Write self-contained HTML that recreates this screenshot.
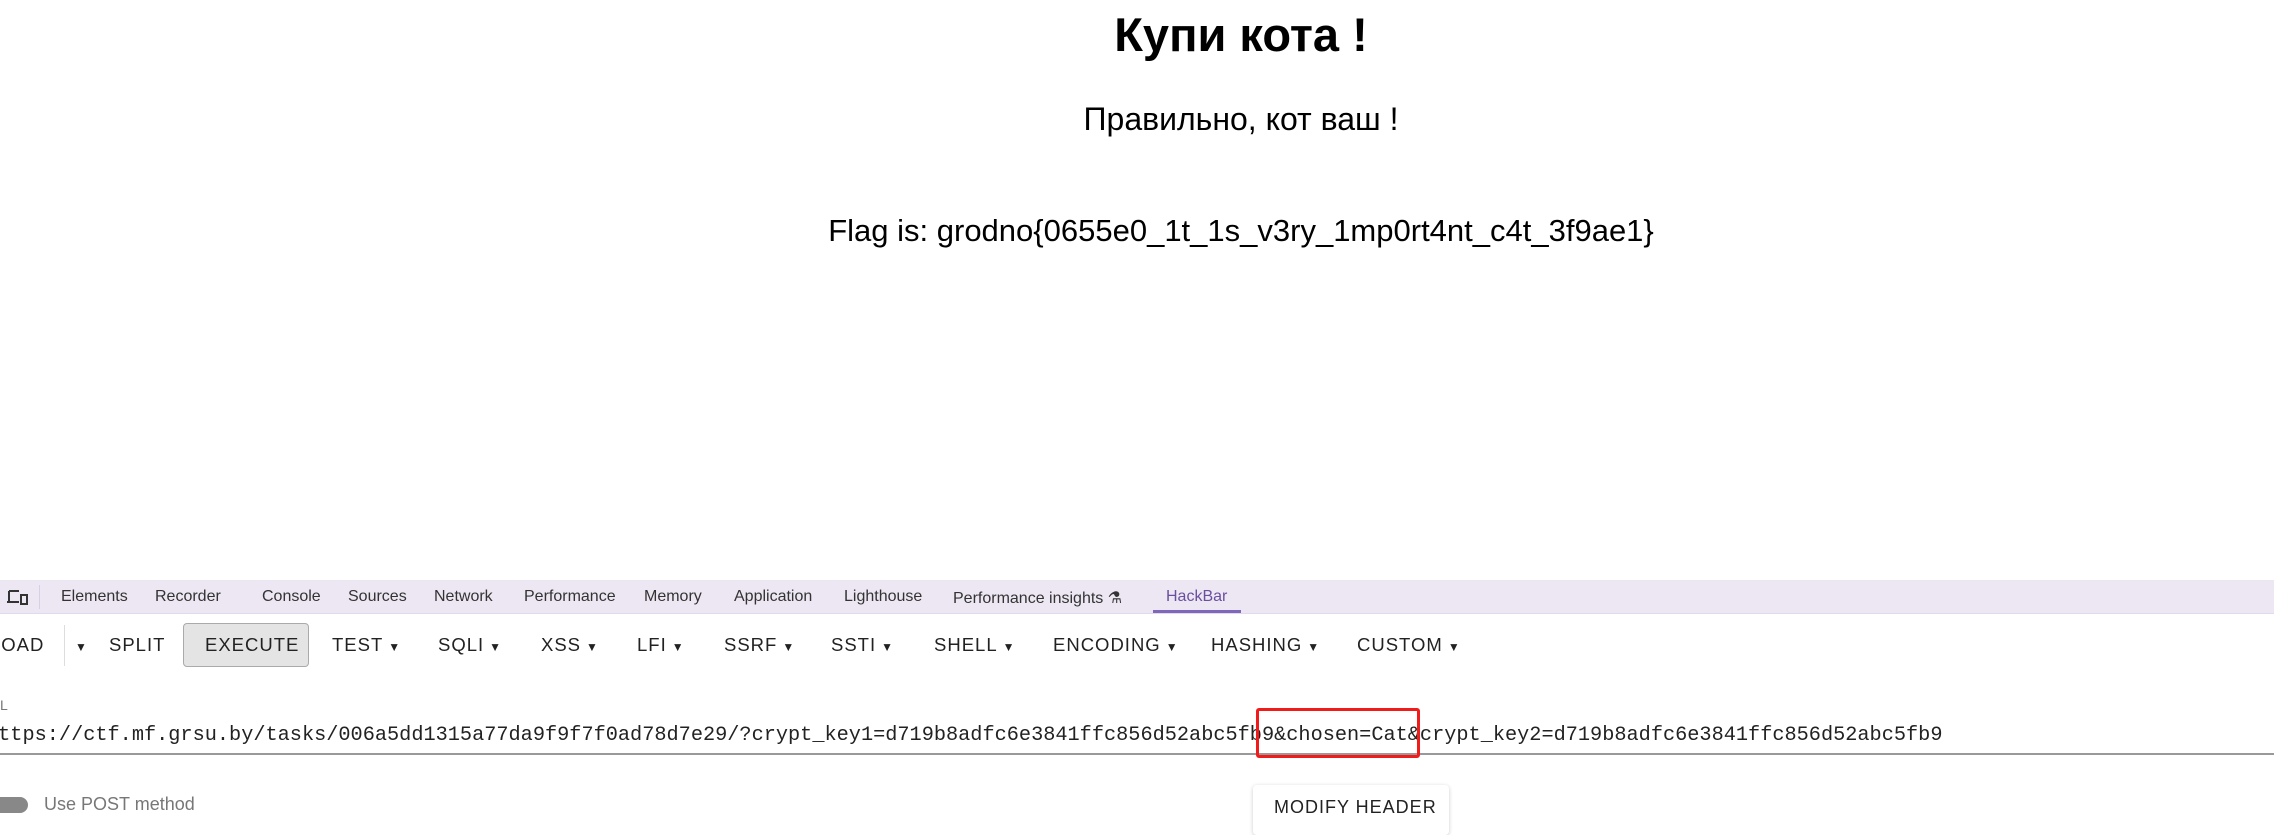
<!DOCTYPE html>
<html><head><meta charset="utf-8"><style>
body{margin:0;width:2274px;height:825px;overflow:hidden;background:#fff;position:relative;font-family:"Liberation Sans",sans-serif}
.a{position:absolute;white-space:nowrap}
h1{position:absolute;margin:0;left:0;width:2482px;text-align:center;top:7px;font-size:47px;font-weight:bold;color:#000}
.c{position:absolute;left:0;width:2482px;text-align:center;color:#000}
.tab{position:absolute;top:588px;font-size:16px;color:#333}
.tb{position:absolute;top:634px;font-size:18.5px;letter-spacing:1px;color:#222;font-weight:500}
.tb i{font-style:normal;font-size:12px;margin-left:5px;letter-spacing:0}
</style></head><body>
<h1>Купи кота !</h1>
<div class="c" style="top:101px;font-size:32px">Правильно, кот ваш !</div>
<div class="c" style="top:213px;font-size:31px">Flag is: grodno{0655e0_1t_1s_v3ry_1mp0rt4nt_c4t_3f9ae1}</div>

<div class="a" style="left:0;top:580px;width:2274px;height:33px;background:#ede7f3;border-bottom:1px solid #e2d9ee"></div>
<svg class="a" style="left:6px;top:588px" width="22" height="18" viewBox="0 0 22 18"><path d="M3 3h10M3 3v11M1 14h12" stroke="#333" stroke-width="2" fill="none"/><rect x="15" y="7" width="6" height="9" stroke="#333" stroke-width="2" fill="none"/></svg>
<div class="a" style="left:39px;top:585px;width:1px;height:24px;background:#d8d0e2"></div>
<div class="tab" style="left:61px">Elements</div>
<div class="tab" style="left:155px">Recorder</div>
<div class="tab" style="left:262px">Console</div>
<div class="tab" style="left:348px">Sources</div>
<div class="tab" style="left:434px">Network</div>
<div class="tab" style="left:524px">Performance</div>
<div class="tab" style="left:644px">Memory</div>
<div class="tab" style="left:734px">Application</div>
<div class="tab" style="left:844px">Lighthouse</div>
<div class="tab" style="left:953px">Performance insights ⚗</div>
<div class="tab" style="left:1166px;color:#6a4fa0">HackBar</div>
<div class="a" style="left:1153px;top:610px;width:88px;height:3px;background:#7e68b8"></div>

<div class="tb" style="left:-10px">LOAD</div>
<div class="a" style="left:64px;top:625px;width:1px;height:41px;background:#ddd"></div>
<div class="tb" style="left:70px"><i>▼</i></div>
<div class="tb" style="left:109px">SPLIT</div>
<div class="a" style="left:183px;top:623px;width:124px;height:42px;background:#e4e4e4;border:1.5px solid #aaa;border-radius:4px"></div>
<div class="tb" style="left:205px">EXECUTE</div>
<div class="tb" style="left:332px">TEST<i>▼</i></div>
<div class="tb" style="left:438px">SQLI<i>▼</i></div>
<div class="tb" style="left:541px">XSS<i>▼</i></div>
<div class="tb" style="left:637px">LFI<i>▼</i></div>
<div class="tb" style="left:724px">SSRF<i>▼</i></div>
<div class="tb" style="left:831px">SSTI<i>▼</i></div>
<div class="tb" style="left:934px">SHELL<i>▼</i></div>
<div class="tb" style="left:1053px">ENCODING<i>▼</i></div>
<div class="tb" style="left:1211px">HASHING<i>▼</i></div>
<div class="tb" style="left:1357px">CUSTOM<i>▼</i></div>

<div class="a" style="left:0;top:697px;font-size:14px;color:#777">L</div>
<div class="a" style="left:-14px;top:724px;font-family:'Liberation Mono',monospace;font-size:20.25px;color:#222">https://ctf.mf.grsu.by/tasks/006a5dd1315a77da9f9f7f0ad78d7e29/?crypt_key1=d719b8adfc6e3841ffc856d52abc5fb9&amp;chosen=Cat&amp;crypt_key2=d719b8adfc6e3841ffc856d52abc5fb9</div>
<div class="a" style="left:0;top:753px;width:2274px;height:1.5px;background:#999"></div>
<div class="a" style="left:1256px;top:708px;width:158px;height:44px;border:3px solid #f01c1c;border-radius:3px"></div>

<div class="a" style="left:-8px;top:797px;width:36px;height:16px;border-radius:8px;background:#888"></div>
<div class="a" style="left:44px;top:794px;font-size:18px;color:#777">Use POST method</div>
<div class="a" style="left:1253px;top:785px;width:196px;height:50px;background:#fff;border-radius:4px;box-shadow:0 1px 4px rgba(0,0,0,.2)"></div>
<div class="a" style="left:1274px;top:797px;font-size:18px;letter-spacing:1px;color:#222;font-weight:500">MODIFY HEADER</div>
</body></html>
